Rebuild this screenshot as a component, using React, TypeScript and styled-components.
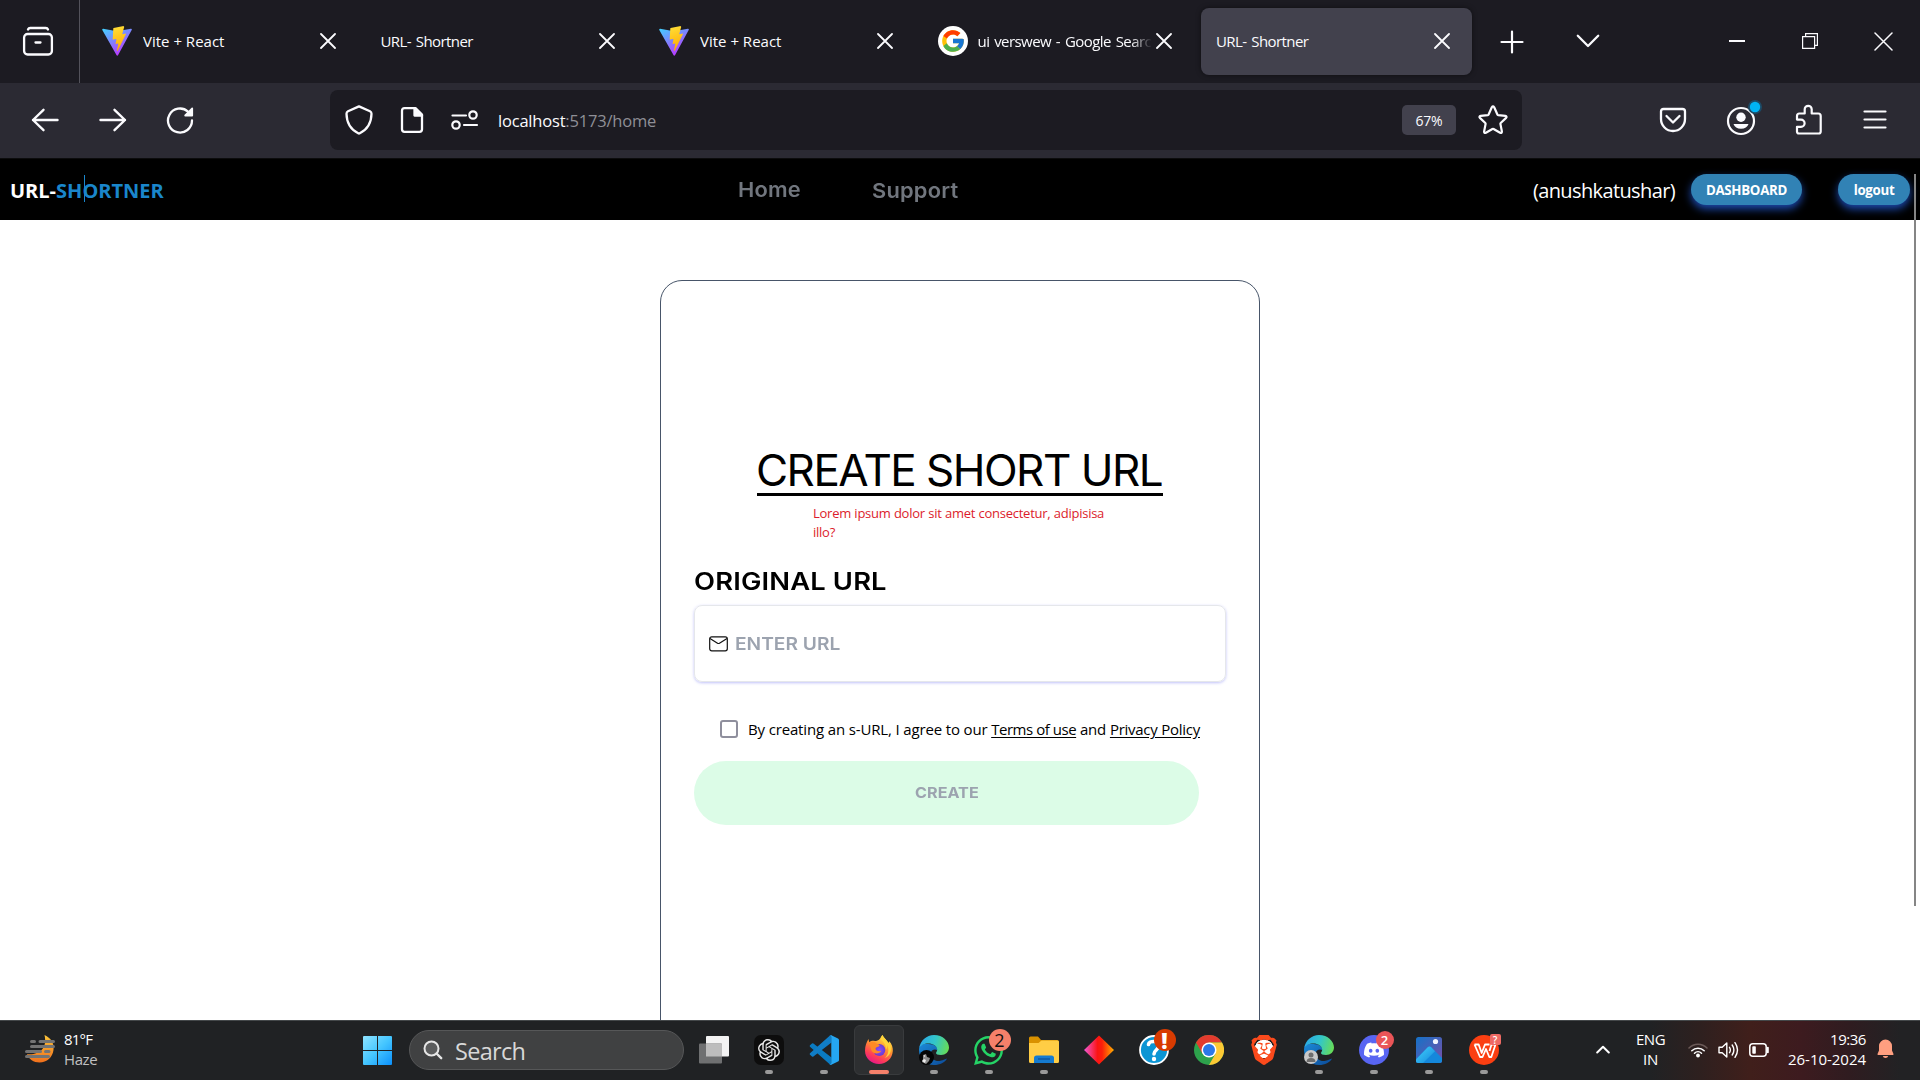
import React from "react";
import styled, { createGlobalStyle } from "styled-components";
import { SiOpenai, SiBrave, SiDiscord } from "react-icons/si";
import { FcGoogle } from "react-icons/fc";
import { FaWhatsapp } from "react-icons/fa";

const ui = '"Open Sans", "Noto Sans", sans-serif';
const display = 'Inter, "Noto Sans", sans-serif';

const Global = createGlobalStyle`
  * { box-sizing: border-box; }
  body { margin: 0; background: #fff; font-family: ${ui}; overflow: hidden; }
  svg { display: block; flex: none; }
`;

const Screen = styled.div`
  width: 1920px;
  height: 1080px;
  display: flex;
  flex-direction: column;
  overflow: hidden;
`;

const Center = styled.div<{ $w: number; $lift?: number }>`
  width: ${(p) => p.$w}px;
  padding-bottom: ${(p) => p.$lift || 0}px;
  flex: none;
  display: flex;
  align-items: center;
  justify-content: center;
`;

/* ---------- tab strip ---------- */

const TabStrip = styled.div`
  height: 83px;
  flex: none;
  display: flex;
  background: #1c1b22;
  color: #fbfbfe;
`;

const Library = styled.div`
  width: 80px;
  padding: 0 3px 1px 0;
  flex: none;
  display: flex;
  align-items: center;
  justify-content: center;
  border-right: 1px solid #53525b;
`;

const Tabs = styled.div`
  display: flex;
  gap: 7.5px;
  padding: 8px 0 8px 7px;
`;

const TabBox = styled.div<{ $active?: boolean }>`
  width: 271px;
  height: 67px;
  padding: 0 22px 1px 15px;
  display: flex;
  align-items: center;
  border-radius: 8px;
  background: ${(p) => (p.$active ? "#42414d" : "transparent")};
  box-shadow: ${(p) => (p.$active ? "0 0 5px rgba(0, 0, 0, 0.5)" : "none")};
`;

const Favicon = styled.div<{ $round?: boolean }>`
  width: 30px;
  height: 30px;
  margin-right: ${(p) => (p.$round ? 10 : 11)}px;
  flex: none;
  display: flex;
  align-items: center;
  justify-content: center;
  border-radius: ${(p) => (p.$round ? "50%" : "0")};
  background: ${(p) => (p.$round ? "#fff" : "transparent")};
`;

const TabTitle = styled.span<{ $track: number; $fade?: boolean }>`
  flex: 1;
  min-width: 0;
  overflow: hidden;
  white-space: nowrap;
  font-size: 15px;
  line-height: 20px;
  padding-bottom: 1px;
  letter-spacing: ${(p) => p.$track}px;
  word-spacing: ${(p) => (p.$track ? 1.5 : 0)}px;
  margin-right: 4px;
  mask-image: ${(p) => (p.$fade ? "linear-gradient(90deg, #000 88%, transparent)" : "none")};
`;

const WindowButtons = styled.div`
  margin-left: auto;
  display: flex;
`;

/* ---------- toolbar ---------- */

const Toolbar = styled.div`
  height: 75px;
  flex: none;
  display: flex;
  padding: 7px 0 8px 11px;
  background: #2b2a33;
  color: #fbfbfe;
`;

const UrlBar = styled.div`
  width: 1192px;
  height: 60px;
  margin-left: 116px;
  padding: 0 14px 0 15px;
  display: flex;
  align-items: center;
  border-radius: 8px;
  background: #1c1b22;
`;

const UrlIcons = styled.div`
  width: 153px;
  display: flex;
  align-items: center;
  gap: 27px;
`;

const UrlText = styled.span`
  font-size: 16.5px;
  line-height: 22px;
  padding-top: 2px;
  letter-spacing: -0.2px;
  white-space: nowrap;
`;

const UrlPath = styled.span`
  color: #8f8f96;
`;

const Zoom = styled.div`
  width: 54px;
  height: 30px;
  margin: 0 22px 0 auto;
  display: flex;
  align-items: center;
  justify-content: center;
  border-radius: 5px;
  background: #42414d;
  font-size: 14px;
  letter-spacing: -0.2px;
  padding-top: 1px;
`;

const ToolbarEnd = styled.div`
  display: flex;
  margin-left: 117px;
`;

/* ---------- site header ---------- */

const SiteNav = styled.div`
  height: 62px;
  flex: none;
  display: grid;
  grid-template-columns: 728px 1fr auto;
  align-items: center;
  padding: 0 10px;
  border-top: 1px solid #0c0c0d;
  background: #000;
`;

const Brand = styled.div`
  display: flex;
  font-size: 20px;
  line-height: 28px;
  font-weight: 700;
  color: #fff;
  padding-top: 2px;
`;

const BrandAccent = styled.span`
  position: relative;
  color: #1a86cb;

  &::after {
    content: "";
    position: absolute;
    left: 28px;
    top: -2px;
    width: 1px;
    height: 27px;
    background: #1a86cb;
  }
`;

const Links = styled.div`
  display: flex;
`;

const NavLink = styled.span<{ $w: number; $drop: number }>`
  width: ${(p) => p.$w}px;
  padding-top: ${(p) => p.$drop}px;
  font-family: ${display};
  font-size: 20.6px;
  line-height: 28px;
  font-weight: 600;
  letter-spacing: 0.2px;
  transform: scaleX(1.06);
  transform-origin: 0 50%;
  color: #71767e;
`;

const Account = styled.div`
  display: flex;
  align-items: center;
`;

const UserName = styled.span`
  font-size: 20px;
  line-height: 28px;
  letter-spacing: -0.62px;
  color: #fff;
  padding-top: 3px;
  margin-right: 16px;
`;

const Pill = styled.div<{ $w: number; $gap?: number }>`
  width: ${(p) => p.$w}px;
  height: 31px;
  margin-left: ${(p) => p.$gap || 0}px;
  display: flex;
  align-items: center;
  justify-content: center;
  padding-top: 1px;
  border-radius: 16px;
  background: #3182b5;
  box-shadow: 0 4px 8px rgba(37, 99, 235, 0.75);
  color: #fff;
  font-size: 13.3px;
  font-weight: 700;
  letter-spacing: -0.3px;
`;

/* ---------- page ---------- */

const Page = styled.div`
  height: 800px;
  flex: none;
  overflow: hidden;
  display: flex;
  justify-content: center;
  padding-top: 60px;
  background: #fff;
`;

const ScrollThumb = styled.div`
  position: absolute;
  right: 4px;
  top: 16px;
  width: 2px;
  height: 732px;
  background: #858585;
`;

const Frame = styled.div`
  position: relative;
`;

const Card = styled.div`
  width: 600px;
  height: 900px;
  flex: none;
  display: flex;
  flex-direction: column;
  align-items: flex-start;
  padding: 166px 33px 0;
  border: 1px solid #475569;
  border-radius: 22px;
`;

const Title = styled.div`
  width: 406px;
  height: 49px;
  align-self: center;
  border-bottom: 3px solid #000;
  font-family: ${display};
  font-size: 44px;
  line-height: 46px;
  letter-spacing: -1.52px;
  text-indent: -1px;
  white-space: nowrap;
  color: #000;
`;

const Notice = styled.div`
  width: 300px;
  margin: 8px 0 0 119px;
  font-size: 13px;
  line-height: 19px;
  letter-spacing: -0.26px;
  word-spacing: 0.3px;
  color: #dc1c2c;
`;

const Label = styled.div`
  margin-top: 24px;
  font-family: ${display};
  font-size: 24.4px;
  line-height: 30px;
  font-weight: 600;
  letter-spacing: 0.15px;
  transform: scaleX(1.12);
  transform-origin: 0 50%;
  color: #000;
`;

const Field = styled.div`
  width: 532px;
  height: 77px;
  margin-top: 9px;
  padding-left: 14px;
  display: flex;
  align-items: center;
  gap: 7px;
  border: 1px solid #e5e7eb;
  border-radius: 8px;
  box-shadow: 0 1px 3px rgba(99, 102, 241, 0.4);
`;

const Placeholder = styled.span`
  font-family: ${display};
  font-size: 17.3px;
  font-weight: 600;
  transform: scaleX(1.11);
  transform-origin: 0 50%;
  color: #9ca3af;
`;

const Consent = styled.div`
  height: 20px;
  margin: 37px 0 0 26px;
  display: flex;
  align-items: center;
  font-size: 15px;
  line-height: 20px;
  letter-spacing: -0.15px;
  white-space: pre;
  color: #000;
`;

const Check = styled.div`
  width: 18px;
  height: 18px;
  margin-right: 10px;
  border: 2px solid #8f8f9d;
  border-radius: 3px;
`;

const Link = styled.span<{ $track: number }>`
  letter-spacing: ${(p) => p.$track}px;
  text-decoration: underline;
  text-underline-offset: 2px;
`;

const Submit = styled.div`
  width: 505px;
  height: 64px;
  margin-top: 22px;
  display: flex;
  align-items: center;
  justify-content: center;
  border-radius: 32px;
  background: #dcfce7;
  color: #9ca3af;
`;

const SubmitText = styled.span`
  font-family: ${display};
  font-size: 14.7px;
  font-weight: 700;
  transform: scaleX(1.1);
`;

/* ---------- taskbar ---------- */

const Taskbar = styled.div`
  height: 60px;
  flex: none;
  display: flex;
  border-top: 1px solid #44484a;
  color: #fff;
  background: linear-gradient(90deg, #202224 0, #202224 1650px, #2e201f 1700px, #401f1b 1750px, #3d1b1f 1800px, #2f1c20 1850px, #222224 1900px);
`;

const Weather = styled.div`
  width: 350px;
  display: flex;
  align-items: center;
  gap: 9px;
  padding: 0 0 4px 25px;
`;

const Lines = styled.div<{ $align?: string }>`
  display: flex;
  flex-direction: column;
  align-items: ${(p) => p.$align || "flex-start"};
  font-size: 15px;
  line-height: 20px;
`;

const Line = styled.span<{ $track: number; $dim?: boolean }>`
  letter-spacing: ${(p) => p.$track}px;
  color: ${(p) => (p.$dim ? "#c0c0c1" : "#fff")};
`;

const Search = styled.div`
  width: 275px;
  height: 40px;
  margin: 9px 2px 0 4px;
  padding: 2px 0 0 13px;
  display: flex;
  align-items: center;
  gap: 12px;
  border: 1px solid #565758;
  border-radius: 20px;
  background: #404142;
  color: #d8d8d8;
  font-size: 23.5px;
  line-height: 36px;
  letter-spacing: -0.7px;

  svg { margin-bottom: 2px; }
`;

const AppCell = styled.div`
  width: 55px;
  padding-top: 4px;
  display: flex;
  justify-content: center;
`;

const AppTile = styled.div<{ $open?: boolean }>`
  position: relative;
  width: 50px;
  height: 50px;
  display: flex;
  align-items: center;
  justify-content: center;
  border-radius: 6px;
  border: 1px solid ${(p) => (p.$open ? "#393b3d" : "transparent")};
  background: ${(p) => (p.$open ? "#2d2f31" : "transparent")};
`;

const Indicator = styled.div<{ $active?: boolean }>`
  position: absolute;
  bottom: 0;
  left: ${(p) => (p.$active ? 14 : 20)}px;
  width: ${(p) => (p.$active ? 20 : 8)}px;
  height: 4px;
  border-radius: 2px;
  background: ${(p) => (p.$active ? "#f5806a" : "#9a9a9a")};
`;

const Badge = styled.div<{ $size: number; $x: number; $y: number; $bg: string; $fg: string; $fs: number; $r?: string; $w?: number }>`
  position: absolute;
  left: ${(p) => p.$x}px;
  top: ${(p) => p.$y}px;
  width: ${(p) => p.$size}px;
  height: ${(p) => p.$size}px;
  display: flex;
  align-items: center;
  justify-content: center;
  border-radius: ${(p) => p.$r || "50%"};
  background: ${(p) => p.$bg};
  color: ${(p) => p.$fg};
  font-size: ${(p) => p.$fs}px;
  font-weight: ${(p) => p.$w || 400};
  line-height: 1;
`;

const Glyph = styled.div<{ $color: string; $bg?: string; $square?: boolean }>`
  width: 30px;
  height: 30px;
  display: flex;
  align-items: center;
  justify-content: center;
  border-radius: ${(p) => (p.$square ? "7px" : "50%")};
  background: ${(p) => p.$bg || "transparent"};
  color: ${(p) => p.$color};
`;

const Tray = styled.div`
  margin-left: auto;
  display: flex;
  align-items: center;
  padding: 0 16px 3px 0;
`;

const Status = styled.div`
  width: 82px;
  display: flex;
  align-items: center;
  gap: 10px;
  margin: 2px 18px 0 10px;
`;

const Overflow = styled.div`
  margin: 0 13px 0 0;
`;

/* ---------- drawings ---------- */

const Cross = ({ size = 16, w = 1.8 }: { size?: number; w?: number }) => (
  <svg width={size} height={size} viewBox={`0 0 ${size} ${size}`} fill="none" stroke="currentColor" strokeWidth={w} strokeLinecap="round">
    <path d={`M1 1L${size - 1} ${size - 1}M${size - 1} 1L1 ${size - 1}`} />
  </svg>
);

const ViteLogo = () => (
  <svg width="30" height="30" viewBox="0 0 30 30">
    <defs>
      <linearGradient id="va" x1="0" y1="0" x2="0.6" y2="1">
        <stop offset="0" stopColor="#41d1ff" />
        <stop offset="1" stopColor="#bd34fe" />
      </linearGradient>
      <linearGradient id="vb" x1="0.4" y1="0" x2="0.6" y2="1">
        <stop offset="0" stopColor="#ffdd35" />
        <stop offset="1" stopColor="#ffa800" />
      </linearGradient>
    </defs>
    <path d="M29.7 4L16 29.3a.8.8 0 0 1-1.4 0L.3 4a.8.8 0 0 1 .8-1.2L15 5.3l13.8-2.5a.8.8 0 0 1 .9 1.2z" fill="url(#va)" />
    <path d="M21.7.1L11.6 2.1a.4.4 0 0 0-.3.4l-.6 10.7c0 .3.2.5.5.4l2.800-.6c.3-.1.5.2.4.4l-.8 4.200c-.1.3.2.5.5.4l1.700-.5c.3-.1.5.2.5.5l-1.400 6.500c-.1.4.5.6.7.3l.2-.3 8.200-16.400c.1-.2-.1-.5-.4-.5l-2.900.6c-.3 0-.5-.2-.4-.5l1.900-6.600c.1-.3-.1-.5-.4-.5z" fill="url(#vb)" />
  </svg>
);

const LibraryIcon = () => (
  <svg width="32" height="32" viewBox="0 0 32 32" fill="none" stroke="currentColor" strokeWidth="2.3" strokeLinecap="round">
    <rect x="2.1" y="9" width="27.8" height="20.5" rx="3.5" />
    <path d="M6 4.5q.6-1.500 2.200-1.500h15.600q1.600 0 2.200 1.500M13.500 17.500h5" />
  </svg>
);

const Plus = () => (
  <svg width="24" height="24" viewBox="0 0 24 24" fill="none" stroke="currentColor" strokeWidth="2.2" strokeLinecap="round">
    <path d="M12 1.500v21M1.500 12h21" />
  </svg>
);

const ChevronDown = () => (
  <svg width="24" height="14" viewBox="0 0 24 14" fill="none" stroke="currentColor" strokeWidth="2.3" strokeLinecap="round" strokeLinejoin="round">
    <path d="M1.800 1.800L12 12 22.200 1.800" />
  </svg>
);

const Minimize = () => (
  <svg width="16" height="16" viewBox="0 0 16 16">
    <path d="M0 6h16v2H0z" fill="currentColor" />
  </svg>
);

const Restore = () => (
  <svg width="16" height="16" viewBox="0 0 16 16" fill="none" stroke="currentColor" strokeWidth="1.2">
    <path d="M.6 3.600h12v11.800H.6zM3.600 3.600V.6h11.800v11.800h-2.800" />
  </svg>
);

const Back = () => (
  <svg width="28" height="24" viewBox="0 0 28 24" fill="none" stroke="currentColor" strokeWidth="2.4" strokeLinecap="round" strokeLinejoin="round">
    <path d="M2 12h24.500M12.500 1.800L2 12l10.500 10.200" />
  </svg>
);

const Forward = () => (
  <svg width="28" height="24" viewBox="0 0 28 24" fill="none" stroke="currentColor" strokeWidth="2.4" strokeLinecap="round" strokeLinejoin="round">
    <path d="M1.500 12H26M15.500 1.800L26 12 15.500 22.200" />
  </svg>
);

const Reload = () => (
  <svg width="28" height="28" viewBox="0 0 28 28" fill="none" stroke="currentColor" strokeWidth="2.3" strokeLinecap="round">
    <path d="M22 5.600A12 12 0 1 0 26 14.500" />
    <path d="M26.200 2.500v7h-7z" fill="currentColor" strokeWidth="1.8" strokeLinejoin="round" />
  </svg>
);

const Shield = () => (
  <svg width="28" height="30" viewBox="0 0 28 30" fill="none" stroke="currentColor" strokeWidth="2.3" strokeLinejoin="round">
    <path d="M14 1.400L25 6.300q1.500.8 1.500 2.500Q26.300 22.500 14.800 28.300q-.8.400-1.600 0Q1.700 22.500 1.500 8.800q0-1.700 1.500-2.500z" />
  </svg>
);

const Doc = () => (
  <svg width="24" height="28" viewBox="0 0 24 28" fill="none" stroke="currentColor" strokeWidth="2.3" strokeLinejoin="round">
    <path d="M4.500 2.200h11L22 8.500v14.800q0 2.500-2.500 2.500h-15Q2 25.800 2 23.300V4.700q0-2.500 2.500-2.500z" />
    <path d="M14.500 2.200v7.300H22z" fill="currentColor" />
  </svg>
);

const Toggles = () => (
  <svg width="28" height="20" viewBox="0 0 28 20" fill="none" stroke="currentColor" strokeWidth="2.2" strokeLinecap="round">
    <circle cx="22" cy="5" r="3.7" />
    <path d="M1.500 5.500h13.500M13 15h13" />
    <circle cx="5" cy="15" r="3.7" />
  </svg>
);

const Star = () => (
  <svg width="30" height="30" viewBox="0 0 30 30" fill="none" stroke="currentColor" strokeWidth="2.2" strokeLinejoin="round">
    <path d="M13.800 2.300q1.200-1.800 2.400 0l3.200 7.200q.2.500.8.600l7.100.8q2 .4.800 2l-5.400 5.100q-.4.400-.3.900l1.500 7.600q.1 2-1.800 1.300L15.600 24q-.6-.3-1.200 0l-6.500 3.800q-1.900.7-1.800-1.300l1.500-7.600q.1-.5-.3-.9L1.900 12.900q-1.200-1.600.8-2l7.100-.8q.6-.1.800-.6z" />
  </svg>
);

const Pocket = () => (
  <svg width="28" height="26" viewBox="0 0 28 26" fill="none" stroke="currentColor" strokeWidth="2.3" strokeLinecap="round" strokeLinejoin="round">
    <path d="M4.500 2h19q2.500 0 2.500 2.500V12a12 12 0 0 1-24 0V4.500Q2 2 4.500 2z" />
    <path d="M7.500 9l6.500 6.500L20.500 9" />
  </svg>
);

const Profile = () => (
  <svg width="42" height="40" viewBox="-1 0 42 40">
    <circle cx="20" cy="21" r="13" fill="none" stroke="currentColor" strokeWidth="2.2" />
    <circle cx="20" cy="17.3" r="4.7" fill="currentColor" />
    <path d="M12.500 24h15a7.800 6.500 0 0 1-15 0z" fill="currentColor" />
    <circle cx="34" cy="7" r="7" fill="#1c4a66" />
    <circle cx="34" cy="7" r="5.2" fill="#00b3f4" />
  </svg>
);

const Puzzle = () => (
  <svg width="28" height="32" viewBox="0 0 28 32" fill="none" stroke="currentColor" strokeWidth="2.2" strokeLinejoin="round">
    <path d="M4.500 9.500h5.200V5.300a3.500 3.500 0 0 1 7 0V9.500h6.500q2.500 0 2.500 2.500v15.500q0 2-2 2H4q-2 0-2-2v-4.700h4a3.600 3.600 0 0 0 0-7.200H2V12q0-2.500 2.500-2.500z" />
  </svg>
);

const MenuIcon = () => (
  <svg width="24" height="20" viewBox="0 0 24 20" fill="none" stroke="currentColor" strokeWidth="2.2" strokeLinecap="round">
    <path d="M1.500 1.500h21M1.500 9.500h21M1.500 17.500h21" />
  </svg>
);

const Mail = () => (
  <svg width="19" height="16" viewBox="0 0 19 16" fill="none" stroke="#111" strokeWidth="1.2" strokeLinejoin="round">
    <rect x=".7" y=".8" width="17.6" height="14" rx="2" />
    <path d="M1 2.500l7.500 4.700q1 .6 2 0L18 2.500" />
  </svg>
);

const HazeIcon = () => (
  <svg width="30" height="30" viewBox="0 0 30 30">
    <defs>
      <linearGradient id="hz" x1="0" y1="0" x2="0" y2="1">
        <stop offset="0" stopColor="#fbc53a" />
        <stop offset="1" stopColor="#f0701c" />
      </linearGradient>
    </defs>
    <path d="M19.500 1C26 4 29.500 9.500 28.500 16 27.500 23.500 22 28.500 14.500 28.500 8.500 28.500 4 25.500 2 20c10 1.500 21-4 17.500-19z" fill="url(#hz)" />
    <path d="M6.500 7.500h3M15 7.500h13.500M6.500 12.500h22M1.500 17.500h14M20.500 17.500h3.500M1.500 22.500h22" stroke="#747474" strokeWidth="3" strokeLinecap="round" />
  </svg>
);

const StartIcon = () => (
  <svg width="29" height="29" viewBox="0 0 29 29">
    <defs>
      <linearGradient id="ws" x1="0" y1="0" x2="1" y2="1">
        <stop offset="0" stopColor="#8fe3ff" />
        <stop offset=".5" stopColor="#45c6ff" />
        <stop offset="1" stopColor="#0b90fb" />
      </linearGradient>
    </defs>
    <path d="M1 0h13v14H0V1q0-1 1-1zM15 0h13q1 0 1 1v13H15zM0 15h14v14H1q-1 0-1-1zM15 15h14v13q0 1-1 1H15z" fill="url(#ws)" />
  </svg>
);

const SearchIcon = () => (
  <svg width="20" height="20" viewBox="0 0 20 20" stroke="#e6e6e6" strokeLinecap="round">
    <circle cx="8.5" cy="8.5" r="7" fill="#5b5c5d" strokeWidth="2" />
    <path d="M13.500 13.500l4.700 4.700" strokeWidth="2.4" />
  </svg>
);

const TaskViewIcon = () => (
  <svg width="30" height="28" viewBox="0 0 30 28">
    <rect x="7" y="0" width="23" height="20.5" rx="1" fill="#f3f3f3" />
    <rect x="0" y="7.5" width="23" height="20" rx="1" fill="#6f7071" />
    <path d="M7 7.500h15q1 0 1 1v12H7z" fill="#bdbdbd" />
  </svg>
);

const VsCode = () => (
  <svg width="30" height="30" viewBox="0 0 30 30">
    <path d="M1 10.300L3 8.500q.7-.5 1.400 0L22.500 22.600V29.800q-1.400 0-2.100-.9L1 11.700q-.7-.7 0-1.400z" fill="#0a7bc2" />
    <path d="M1 19.700L3 21.500q.7.5 1.400 0L22.500 7.400V.2q-1.400 0-2.100.9L1 18.300q-.7.7 0 1.400z" fill="#107dc6" />
    <path d="M22.300 29.800q-1.300.1-2-.9 1.600 1 2-.8V1.900q-.4-1.800-2-.8.7-1 2-.9L29 3.400q1 .5 1 1.600v20q0 1.100-1 1.600z" fill="#25a7f2" />
  </svg>
);

const Firefox = () => (
  <svg width="30" height="30" viewBox="0 0 30 30">
    <defs>
      <linearGradient id="ff" x1=".8" y1="0" x2=".3" y2="1">
        <stop offset="0" stopColor="#fff44f" />
        <stop offset=".4" stopColor="#ff9a2e" />
        <stop offset=".75" stopColor="#ff3f55" />
        <stop offset="1" stopColor="#e5158b" />
      </linearGradient>
      <radialGradient id="fg">
        <stop offset="0" stopColor="#8a4dff" />
        <stop offset="1" stopColor="#6a3ad0" />
      </radialGradient>
    </defs>
    <path d="M18.500 0c1 3 4 4.500 6 8l.8-1.800C28 9 29 12.500 28.800 16 28.300 23.500 22.500 29 15 29S1 23.500 1 15.500C1 11 2.500 7 4.500 4l.7 3.200C6.700 6 9 5.600 10.800 6c1.400 0 3-.2 4.200-1.200 1.400-1.200 2-3.200 3.500-4.800z" fill="url(#ff)" />
    <circle cx="15.3" cy="15" r="6" fill="url(#fg)" />
    <path d="M5 8.500c3-2.500 6-1.500 8 .5 1.800.4 2.800 1 2.500 2-.8 1-3.500.8-4 2.500.2 2.500 3.300 3.300 5.800 2.200-1.500 3-6.300 3.800-9.300.8C6.500 14.500 7 11 5 8.500z" fill="#ff8a24" />
    <path d="M17 4.500c2 2 5 4.500 5 10 1-1 1.300-3 .8-5 3 5 1.500 11-2.300 13.500 5-1.500 7.500-6.500 6-12.500L24.500 8c-2-3.500-5-5-6-8-1.200 1.300-1.700 3-1.500 4.500z" fill="#ffd43a" />
  </svg>
);

const Edge = () => (
  <svg width="30" height="30" viewBox="0 0 30 30">
    <defs>
      <linearGradient id="e1" x1="0" y1=".4" x2="1" y2=".6">
        <stop offset="0" stopColor="#2aa8e8" />
        <stop offset=".5" stopColor="#33c6c8" />
        <stop offset="1" stopColor="#68dd55" />
      </linearGradient>
      <linearGradient id="e2" x1="0" y1="0" x2="1" y2="1">
        <stop offset="0" stopColor="#1b8ad8" />
        <stop offset="1" stopColor="#0c4a98" />
      </linearGradient>
    </defs>
    <path d="M0 15C0 9 4 9 9.500 9c6 0 9.500 3 9 6.500-2-2-6.500-1-7 3-.3 5 5 8.500 10 7.300 3-.6 5-1.800 6.500-2.300C26 27.500 21 30 15 30 6.500 30 0 23.500 0 15z" fill="url(#e2)" />
    <path d="M.2 13C1.500 5.500 7.500 0 15 0c9 0 15 6.500 15 12.500 0 4.500-3.500 7.500-8 7.500-3.500 0-5-1-5-2 0-.8 1.200-1.500 1.200-3.500C18 11 14 8.500 9.500 8.500 5 8.500 1.500 10.500.2 13z" fill="url(#e1)" />
  </svg>
);

const Folder = () => (
  <svg width="30" height="28" viewBox="0 0 30 28">
    <path d="M0 2q0-1.500 1.500-1.500h7.500L12 4h16q2 0 2 2v3H0z" fill="#d99200" />
    <path d="M0 7h9.500l3-2.500H28.500Q30 4.500 30 6v19.500q0 1.500-1.500 1.500h-27Q0 27 0 25.500z" fill="#ffcd45" />
    <path d="M5 27v-5q0-2.500 2.500-2.500h15Q25 19.500 25 22v5z" fill="#157bd0" />
    <path d="M9 23h12" stroke="#0c4f94" strokeWidth="1.2" />
  </svg>
);

const Diamond = () => (
  <svg width="30" height="30" viewBox="0 0 30 30">
    <defs>
      <linearGradient id="dm">
        <stop offset="0" stopColor="#f05ad8" />
        <stop offset=".45" stopColor="#fb1414" />
        <stop offset=".6" stopColor="#fb1f0a" />
        <stop offset="1" stopColor="#ffb000" />
      </linearGradient>
    </defs>
    <path d="M15 .5L30 15 15 29.500 0 15z" fill="url(#dm)" />
  </svg>
);

const HelpIcon = () => (
  <svg width="30" height="30" viewBox="0 0 30 30" fill="none" strokeLinecap="round">
    <circle cx="15" cy="15" r="14" fill="#0b95d4" stroke="#fff" strokeWidth="1.8" />
    <path d="M9.500 9.500C10 5.500 20 5 20 10.500c0 4-5 4.500-5 8.500" stroke="#fff" strokeWidth="3.6" />
    <circle cx="15" cy="24" r="2.2" fill="#fff" />
  </svg>
);

const Chrome = () => (
  <svg width="30" height="30" viewBox="0 0 30 30">
    <circle cx="15" cy="15" r="15" fill="#2da24c" />
    <path d="M2 7.500A15 15 0 0 1 28 7.500H15L8.500 18.700z" fill="#e33b2e" />
    <path d="M28 7.500A15 15 0 0 1 15 30l6.500-11.300L15 7.500z" fill="#fcc934" />
    <circle cx="15" cy="15" r="7.5" fill="#fff" />
    <circle cx="15" cy="15" r="6" fill="#2b78e8" />
  </svg>
);

const BraveBack = styled.div`
  display: grid;
  place-items: center;
  color: #fb4a1c;
  background: radial-gradient(circle at 50% 46%, #fff 0 9px, transparent 9.5px);
`;

const Photos = () => (
  <svg width="26" height="26" viewBox="0 0 26 26">
    <defs>
      <linearGradient id="p1" x1="0" y1="0" x2="1" y2="1">
        <stop offset="0" stopColor="#1472c8" />
        <stop offset="1" stopColor="#7a4fa8" />
      </linearGradient>
      <linearGradient id="p2" x1="0" y1="0" x2="1" y2="1">
        <stop offset="0" stopColor="#42d2fb" />
        <stop offset="1" stopColor="#1488dd" />
      </linearGradient>
      <clipPath id="pc"><rect width="26" height="26" rx="2.5" /></clipPath>
    </defs>
    <g clipPath="url(#pc)">
      <rect width="26" height="26" fill="url(#p1)" />
      <path d="M0 22L11.500 10.500q2-2 4 0L26 21v5H0z" fill="#1488dc" />
      <path d="M0 22.500L11.500 10.500q2-2 4 0l3.500 3.800L7 26H0z" fill="url(#p2)" />
      <circle cx="19.5" cy="4.5" r="2.6" fill="#f2f4ff" />
    </g>
  </svg>
);

const Wps = () => (
  <svg width="30" height="30" viewBox="0 0 30 30">
    <circle cx="15" cy="15" r="15" fill="#fb3f12" />
    <path d="M5.500 9.500h4.200l3 8.500 3.300-8.500h4.500M5.500 9.500l5.500 12.500h2.500L17 14l3.300 8h2l4.200-12.500h-4L20.500 16" fill="none" stroke="#fff" strokeWidth="1.8" strokeLinejoin="round" />
  </svg>
);

const Up = () => (
  <svg width="14" height="9" viewBox="0 0 14 9" fill="none" stroke="#fff" strokeWidth="2" strokeLinecap="round" strokeLinejoin="round">
    <path d="M1.200 7.500L7 1.700l5.800 5.800" />
  </svg>
);

const Wifi = () => (
  <svg width="20" height="16" viewBox="0 0 20 16" fill="none" strokeWidth="1.5" strokeLinecap="round">
    <path d="M1 6a12.500 12.500 0 0 1 18 0" stroke="#6b5a58" />
    <path d="M3.800 8.700a8.800 8.800 0 0 1 12.400 0M6.500 11.200a5 5 0 0 1 7 0" stroke="#fff" />
    <circle cx="10" cy="13.5" r="1.9" fill="#fff" />
  </svg>
);

const Speaker = () => (
  <svg width="21" height="18" viewBox="0 0 21 18" fill="none" stroke="#fff" strokeWidth="1.4" strokeLinecap="round" strokeLinejoin="round">
    <path d="M1 6.300h3.200L8.800 2v14l-4.600-4.300H1z" />
    <path d="M11.500 6.300q1.700 2.700 0 5.400M14.200 4q3.400 5 0 10M17 1.700q5 7.300 0 14.600" />
  </svg>
);

const Battery = () => (
  <svg width="20" height="14" viewBox="0 0 20 14" fill="none" stroke="#fff" strokeWidth="1.5">
    <rect x=".8" y=".8" width="16.4" height="12.4" rx="3" />
    <rect x="3.3" y="3.3" width="3.5" height="7.4" rx=".8" fill="#fff" stroke="none" />
    <path d="M18.800 4.800v4.400" strokeWidth="2" strokeLinecap="round" />
  </svg>
);

const Bell = () => (
  <svg width="17" height="20" viewBox="0 0 17 20" fill="#ff9f80">
    <path d="M8.500.5a6.500 6.500 0 0 1 6.500 6.500v4.500l1.500 3.500q.2.900-.7.900H1.200q-.9 0-.7-.9L2 11.500V7A6.500 6.500 0 0 1 8.500.5zM5.800 17h5.400q-.5 2-2.700 2t-2.700-2z" />
  </svg>
);

/* ---------- composition ---------- */

type TabData = { title: string; track: number; icon?: "vite" | "google"; active?: boolean };

const tabs: TabData[] = [
  { title: "Vite + React", track: 0, icon: "vite" },
  { title: "URL- Shortner", track: -0.58 },
  { title: "Vite + React", track: 0, icon: "vite" },
  { title: "ui verswew - Google Search", track: -0.57, icon: "google" },
  { title: "URL- Shortner", track: -0.58, active: true },
];

const Tab = ({ title, track, icon, active }: TabData) => (
  <TabBox $active={active}>
    {icon && (
      <Favicon $round={icon === "google"}>
        {icon === "vite" ? <ViteLogo /> : <FcGoogle size={26} />}
      </Favicon>
    )}
    <TabTitle $track={track} $fade={icon === "google"}>{title}</TabTitle>
    <Cross />
  </TabBox>
);

const apps: { icon: React.ReactNode; running?: boolean; active?: boolean; badge?: React.ReactNode }[] = [
  { icon: <TaskViewIcon /> },
  { icon: <Glyph $color="#e8e8e8" $bg="#0d0d0d" $square><SiOpenai size={22} /></Glyph>, running: true },
  { icon: <VsCode />, running: true },
  { icon: <Firefox />, running: true, active: true },
  {
    icon: <Edge />,
    running: true,
    badge: (
      <Badge $size={15} $x={9} $y={24} $bg="#050505" $fg="#fff" $fs={8}>
        <svg width="15" height="15" viewBox="0 0 15 15"><path d="M4 5l3-1 1 3 3 1-1 3-3 3-4-2 1-3z" fill="#8d8d8d" /><path d="M5 9l2 1-1 3-3-2zM5 5l1.500 1L5 7z" fill="#eee" /></svg>
      </Badge>
    ),
  },
  {
    icon: <Glyph $color="#25d366"><FaWhatsapp size={33} /></Glyph>,
    running: true,
    badge: <Badge $size={22} $x={24} $y={3} $bg="#f5806a" $fg="#111" $fs={18}>2</Badge>,
  },
  { icon: <Folder />, running: true },
  { icon: <Diamond /> },
  {
    icon: <HelpIcon />,
    badge: <Badge $size={22} $x={24} $y={3} $bg="#d83b01" $fg="#fff" $fs={22} $w={800}>!</Badge>,
  },
  { icon: <Chrome /> },
  { icon: <BraveBack><SiBrave size={30} /></BraveBack> },
  {
    icon: <Edge />,
    running: true,
    badge: (
      <Badge $size={14} $x={9} $y={24} $bg="#c9c9c9" $fg="#777" $fs={8}>
        <svg width="10" height="10" viewBox="0 0 10 10" fill="#6e6e6e"><circle cx="5" cy="3" r="2.5" /><path d="M.5 10q0-4 4.500-4t4.500 4z" /></svg>
      </Badge>
    ),
  },
  {
    icon: <Glyph $color="#fff" $bg="#5865f2"><SiDiscord size={20} /></Glyph>,
    running: true,
    badge: <Badge $size={18} $x={26} $y={5} $bg="#ea5558" $fg="#fff" $fs={13} $w={600}>2</Badge>,
  },
  { icon: <Photos />, running: true },
  {
    icon: <Wps />,
    running: true,
    badge: <Badge $size={11} $x={30} $y={8} $bg="#ee6a64" $fg="#fff" $fs={10} $w={600} $r="2px">?</Badge>,
  },
];

export default function App() {
  return (
    <Screen>
      <Global />
      <TabStrip>
        <Library><LibraryIcon /></Library>
        <Tabs>{tabs.map((t, i) => <Tab key={i} {...t} />)}</Tabs>
        <Center $w={80}><Plus /></Center>
        <Center $w={72} $lift={2}><ChevronDown /></Center>
        <WindowButtons>
          <Center $w={73}><Minimize /></Center>
          <Center $w={73} $lift={1}><Restore /></Center>
          <Center $w={74} $lift={1}><Cross size={19} w={1.5} /></Center>
        </WindowButtons>
      </TabStrip>

      <Toolbar>
        <Center $w={68}><Back /></Center>
        <Center $w={67}><Forward /></Center>
        <Center $w={68}><Reload /></Center>
        <UrlBar>
          <UrlIcons><Shield /><Doc /><Toggles /></UrlIcons>
          <UrlText>localhost<UrlPath>:5173/home</UrlPath></UrlText>
          <Zoom>67%</Zoom>
          <Star />
        </UrlBar>
        <ToolbarEnd>
          <Center $w={68}><Pocket /></Center>
          <Center $w={68}><Profile /></Center>
          <Center $w={68}><Puzzle /></Center>
          <Center $w={64}><MenuIcon /></Center>
        </ToolbarEnd>
      </Toolbar>

      <Frame>
        <SiteNav>
          <Brand>URL-<BrandAccent>SHORTNER</BrandAccent></Brand>
          <Links>
            <NavLink $w={134} $drop={2}>Home</NavLink>
            <NavLink $w={90} $drop={3}>Support</NavLink>
          </Links>
          <Account>
            <UserName>(anushkatushar)</UserName>
            <Pill $w={111}>DASHBOARD</Pill>
            <Pill $w={72} $gap={36}>logout</Pill>
          </Account>
        </SiteNav>
        <Page>
          <Card>
            <Title>CREATE SHORT URL</Title>
            <Notice>Lorem ipsum dolor sit amet consectetur, adipisisa illo?</Notice>
            <Label>ORIGINAL URL</Label>
            <Field><Mail /><Placeholder>ENTER URL</Placeholder></Field>
            <Consent>
              <Check />
              {"By creating an s-URL, I agree to our "}
              <Link $track={-0.46}>Terms of use</Link>
              {" and "}
              <Link $track={-0.26}>Privacy Policy</Link>
            </Consent>
            <Submit><SubmitText>CREATE</SubmitText></Submit>
          </Card>
        </Page>
        <ScrollThumb />
      </Frame>

      <Taskbar>
        <Weather>
          <HazeIcon />
          <Lines>
            <Line $track={-0.8}>81°F</Line>
            <Line $track={-0.4} $dim>Haze</Line>
          </Lines>
        </Weather>
        <Center $w={55}><StartIcon /></Center>
        <Search><SearchIcon />Search</Search>
        {apps.map((a, i) => (
          <AppCell key={i}>
            <AppTile $open={a.active}>
              {a.icon}
              {a.badge}
              {a.running && <Indicator $active={a.active} />}
            </AppTile>
          </AppCell>
        ))}
        <Tray>
          <Overflow><Up /></Overflow>
          <Center $w={55}>
            <Lines $align="center">
              <Line $track={-0.5}>ENG</Line>
              <Line $track={-0.3}>IN</Line>
            </Lines>
          </Center>
          <Status><Wifi /><Speaker /><Battery /></Status>
          <Lines $align="flex-end">
            <Line $track={-0.45}>19:36</Line>
            <Line $track={-0.03}>26-10-2024</Line>
          </Lines>
          <Center $w={38}><Bell /></Center>
        </Tray>
      </Taskbar>
    </Screen>
  );
}
